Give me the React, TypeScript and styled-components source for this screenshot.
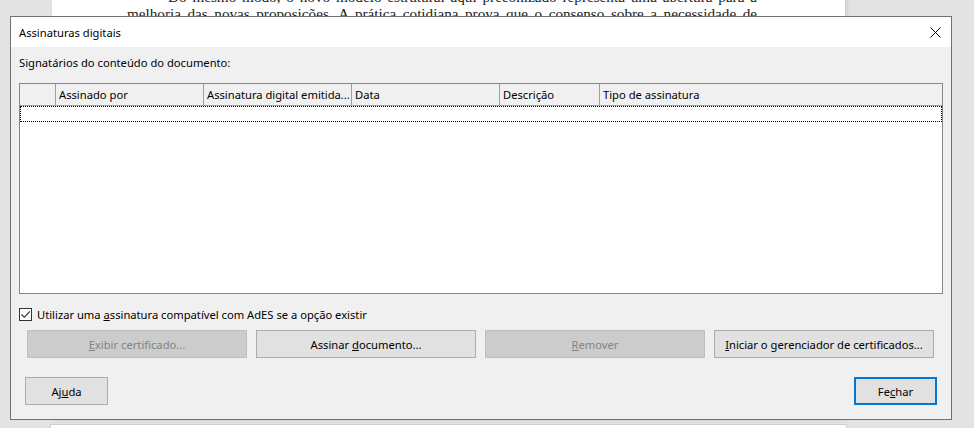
import React, { FC } from "react";
import styled, { createGlobalStyle } from "styled-components";

const GlobalStyle = createGlobalStyle`
  html, body {
    margin: 0;
    padding: 0;
    background: #e3e3e3;
  }
  * {
    box-sizing: border-box;
  }
`;

const Screen = styled.div`
  position: relative;
  width: 974px;
  height: 428px;
  overflow: hidden;
  background: #e3e3e3;
  display: flex;
  flex-direction: column;
  gap: 4px;
`;

const Page = styled.div`
  margin-left: 52px;
  width: 793px;
  height: 420px;
  flex-shrink: 0;
  background: #ffffff;
  box-shadow: 2px 0 4px rgba(0, 0, 0, 0.12);
  padding: 0 88px 0 75px;
  overflow: hidden;
`;

const PageText = styled.div`
  margin-top: -12px;
  font-family: "Liberation Serif", "DejaVu Serif", serif;
  font-size: 15.2px;
  line-height: 17px;
  color: #222;
`;

const TextLine = styled.div<{ $indent?: number }>`
  padding-left: ${({ $indent }) => $indent ?? 0}px;
  text-align: justify;
  text-align-last: justify;
  white-space: nowrap;
`;

const NextPage = styled.div`
  margin-left: 50px;
  width: 797px;
  height: 20px;
  flex-shrink: 0;
  background: #ffffff;
  border: 1px solid #cfcfcf;
`;

const Dialog = styled.div`
  position: absolute;
  left: 10px;
  top: 16px;
  width: 942px;
  height: 404px;
  border: 1px solid #707070;
  background: #f0f0f0;
  display: flex;
  flex-direction: column;
  font-family: "Segoe UI", "Noto Sans", sans-serif;
  font-size: 11.2px;
  color: #000;
`;

const TitleBar = styled.div`
  height: 30px;
  flex-shrink: 0;
  background: #ffffff;
  display: flex;
  align-items: center;
  justify-content: space-between;
  padding: 0 10px 0 8px;
`;

const Title = styled.span`
  font-size: 11.2px;
`;

const CloseIcon = styled.svg`
  width: 11px;
  height: 11px;
  display: block;
`;

const Body = styled.div`
  flex: 1;
  display: flex;
  flex-direction: column;
  padding: 0 8px;
`;

const Caption = styled.div`
  margin-top: 8px;
  height: 16px;
  line-height: 16px;
`;

const Table = styled.div`
  margin-top: 12px;
  height: 211px;
  border: 1px solid #828790;
  background: #ffffff;
  display: flex;
  flex-direction: column;
`;

const HeaderRow = styled.div`
  height: 22px;
  display: flex;
  background: #f0f0f0;
  border-bottom: 1px solid #a0a0a0;
`;

const HeaderCell = styled.div<{ $w?: number; $first?: boolean }>`
  ${({ $w }) => ($w ? `width: ${$w}px; flex-shrink: 0;` : "flex: 1;")}
  border-left: ${({ $first }) => ($first ? "none" : "1px solid #a0a0a0")};
  padding-left: 3px;
  line-height: 21px;
  white-space: nowrap;
  overflow: hidden;
`;

const FocusRow = styled.div`
  height: 16px;
  border: 1px dotted #000;
`;

const CheckRow = styled.label`
  margin-top: 13px;
  height: 15px;
  display: flex;
  align-items: center;
  gap: 5px;
`;

const CheckBox = styled.span`
  width: 13px;
  height: 13px;
  border: 1px solid #333;
  background: #fff;
  display: flex;
  align-items: center;
  justify-content: center;
`;

const ActionRow = styled.div`
  margin-top: 8px;
  padding-left: 8px;
  display: flex;
  gap: 9px;
`;

const Button = styled.button<{ $disabled?: boolean; $default?: boolean; $w?: number }>`
  width: ${({ $w }) => $w ?? 220}px;
  height: 28px;
  padding: 0;
  font-family: inherit;
  font-size: 11.2px;
  background: ${({ $disabled }) => ($disabled ? "#cccccc" : "#e1e1e1")};
  color: ${({ $disabled }) => ($disabled ? "#838383" : "#000")};
  border: ${({ $default, $disabled }) =>
    $default ? "2px solid #0078d7" : $disabled ? "1px solid #bfbfbf" : "1px solid #adadad"};
`;

const Footer = styled.div`
  margin-top: 19px;
  padding: 0 6px;
  display: flex;
  justify-content: space-between;
`;

const columns = [
  { label: "", w: 35 },
  { label: "Assinado por", w: 148 },
  { label: "Assinatura digital emitida...", w: 148 },
  { label: "Data", w: 148 },
  { label: "Descrição", w: 100 },
  { label: "Tipo de assinatura" },
];

const App: FC = () => {
  return (
    <>
      <GlobalStyle />
      <Screen>
        <Page>
          <PageText>
            <TextLine $indent={41}>
              Do mesmo modo, o novo modelo estrutural aqui preconizado representa uma abertura para a
            </TextLine>
            <TextLine>
              melhoria das novas proposições. A prática cotidiana prova que o consenso sobre a necessidade de
            </TextLine>
          </PageText>
        </Page>
        <NextPage />

        <Dialog>
          <TitleBar>
            <Title>Assinaturas digitais</Title>
            <CloseIcon viewBox="0 0 11 11">
              <path d="M0.5 0.5 L10.5 10.5 M10.5 0.5 L0.5 10.5" stroke="#000" strokeWidth="1" />
            </CloseIcon>
          </TitleBar>
          <Body>
            <Caption>Signatários do conteúdo do documento:</Caption>
            <Table>
              <HeaderRow>
                {columns.map((c, i) => (
                  <HeaderCell key={i} $w={c.w} $first={i === 0}>
                    {c.label}
                  </HeaderCell>
                ))}
              </HeaderRow>
              <FocusRow />
            </Table>
            <CheckRow>
              <CheckBox>
                <svg width="11" height="11" viewBox="0 0 11 11">
                  <path d="M1.5 5.5 L4.3 8.3 L9.8 2.3" fill="none" stroke="#222" strokeWidth="1.1" />
                </svg>
              </CheckBox>
              <span>
                Utilizar uma <u>a</u>ssinatura compatível com AdES se a opção existir
              </span>
            </CheckRow>
            <ActionRow>
              <Button $disabled>
                <u>E</u>xibir certificado...
              </Button>
              <Button>
                Assinar <u>d</u>ocumento...
              </Button>
              <Button $disabled>
                <u>R</u>emover
              </Button>
              <Button>
                <u>I</u>niciar o gerenciador de certificados...
              </Button>
            </ActionRow>
            <Footer>
              <Button $w={83}>
                Aj<u>u</u>da
              </Button>
              <Button $w={83} $default>
                Fe<u>c</u>har
              </Button>
            </Footer>
          </Body>
        </Dialog>
      </Screen>
    </>
  );
};

export default App;
